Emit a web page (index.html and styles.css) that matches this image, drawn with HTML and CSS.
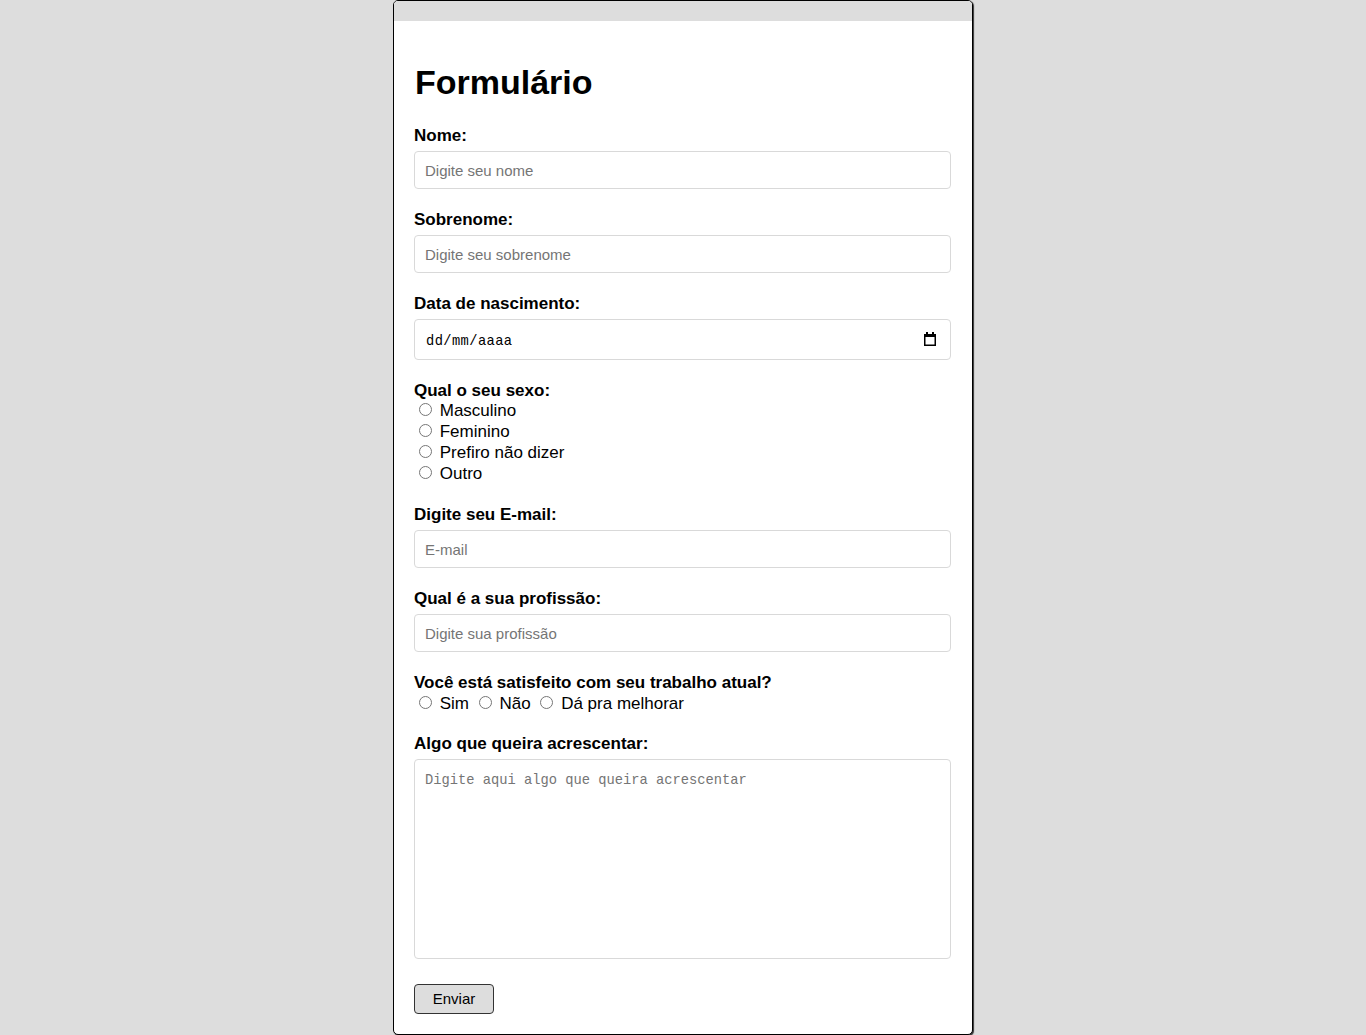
FILE: index.html
```html
<!DOCTYPE html>
<html lang="pt-BR">
<head>
<meta charset="utf-8">
<title>Formulário</title>
<link rel="stylesheet" href="styles.css">
</head>
<body>
<div class="card">
  <div class="card-band"></div>
  <div class="card-body">
    <h1 class="title">Formulário</h1>
    <form class="form">
      <div class="field">
        <label class="field-label" for="nome">Nome:</label>
        <input class="text-input" id="nome" type="text" placeholder="Digite seu nome">
      </div>
      <div class="field">
        <label class="field-label" for="sobrenome">Sobrenome:</label>
        <input class="text-input" id="sobrenome" type="text" placeholder="Digite seu sobrenome">
      </div>
      <div class="field">
        <label class="field-label" for="nasc">Data de nascimento:</label>
        <div class="date-field">
          <input class="text-input date-input" id="nasc" type="text" placeholder="dd/mm/aaaa">
          <svg class="date-icon" width="12" height="14" viewBox="0 0 12 14" aria-hidden="true"><path fill="#000" fill-rule="evenodd" d="M2 0h2v2h4V0h2v2h2v12H0V2h2zM1.5 5v7.5h9V5z"/></svg>
        </div>
      </div>
      <div class="field">
        <div class="field-label radio-title">Qual o seu sexo:</div>
        <div class="option"><input type="radio" name="sexo" id="s1"> <label for="s1">Masculino</label></div>
        <div class="option"><input type="radio" name="sexo" id="s2"> <label for="s2">Feminino</label></div>
        <div class="option"><input type="radio" name="sexo" id="s3"> <label for="s3">Prefiro não dizer</label></div>
        <div class="option"><input type="radio" name="sexo" id="s4"> <label for="s4">Outro</label></div>
      </div>
      <div class="field">
        <label class="field-label" for="email">Digite seu E-mail:</label>
        <input class="text-input" id="email" type="email" placeholder="E-mail">
      </div>
      <div class="field">
        <label class="field-label" for="prof">Qual é a sua profissão:</label>
        <input class="text-input" id="prof" type="text" placeholder="Digite sua profissão">
      </div>
      <div class="field">
        <div class="field-label radio-title">Você está satisfeito com seu trabalho atual?</div>
        <div class="option option-inline"><input type="radio" name="sat" id="t1"> <label for="t1">Sim</label> <input type="radio" name="sat" id="t2"> <label for="t2">Não</label> <input type="radio" name="sat" id="t3"> <label for="t3">Dá pra melhorar</label></div>
      </div>
      <div class="field field-last">
        <label class="field-label" for="extra">Algo que queira acrescentar:</label>
        <textarea class="text-area" id="extra" placeholder="Digite aqui algo que queira acrescentar"></textarea>
      </div>
      <button class="submit" type="button">Enviar</button>
    </form>
  </div>
</div>
</body>
</html>
```
FILE: styles.css
```css
html, body {
  margin: 0;
  padding: 0;
}
body {
  background: #dddddd;
  font-family: "Liberation Sans", Arial, sans-serif;
  color: #000;
}
.card {
  width: 578px;
  margin: 0 auto;
  background: #fff;
  border: 1px solid #000;
  border-radius: 5px;
  box-shadow: 1px 1px 1px #333;
  overflow: hidden;
}
.card-band {
  height: 20px;
  background: #dddddd;
}
.card-body {
  padding: 0 21px 20px 20px;
}
.title {
  margin: 41px 0 23px 1px;
  font-size: 34px;
  line-height: 41px;
  font-weight: bold;
}
.form {
  margin: 0;
}
.field {
  margin-bottom: 21px;
}
.field-last {
  margin-bottom: 25px;
}
.field-label {
  display: block;
  font-size: 17px;
  line-height: 19px;
  font-weight: bold;
  margin-bottom: 6px;
}
.radio-title {
  margin-bottom: 0;
}
.text-input {
  display: block;
  box-sizing: border-box;
  width: 100%;
  height: 38px;
  margin: 0;
  padding: 0 10px;
  border: 1px solid #d9d9d9;
  border-radius: 4px;
  font-family: "Liberation Sans", Arial, sans-serif;
  font-size: 15px;
  color: #000;
  background: #fff;
  outline: none;
}
.text-input::placeholder {
  color: #757575;
}
.date-field {
  position: relative;
}
.date-input {
  height: 41px;
  padding: 3px 10px 0 11px;
  font-family: "Liberation Mono", "DejaVu Sans Mono", monospace;
  font-size: 13.75px;
  letter-spacing: 0.4px;
}
.date-input::placeholder {
  color: #000;
}
.date-icon {
  position: absolute;
  right: 15px;
  top: 13px;
}
.option {
  font-size: 17px;
  line-height: 21px;
  height: 21px;
}
.option-inline {
  box-sizing: border-box;
  padding-top: 1px;
}
.option input[type="radio"] {
  margin: 3px 3px 0 5px;
}
.text-area {
  display: block;
  box-sizing: border-box;
  width: 100%;
  height: 200px;
  margin: 0;
  padding: 11px 10px 10px;
  border: 1px solid #d9d9d9;
  border-radius: 4px;
  font-family: "Liberation Mono", "DejaVu Sans Mono", monospace;
  font-size: 13.75px;
  line-height: 20px;
  resize: none;
  outline: none;
}
.text-area::placeholder {
  color: #757575;
}
.submit {
  display: block;
  box-sizing: border-box;
  width: 80px;
  height: 30px;
  margin: 0;
  padding: 0 0 2px;
  background: #dddddd;
  border: 1px solid #333;
  border-radius: 4px;
  font-family: "Liberation Sans", Arial, sans-serif;
  font-size: 15px;
  color: #000;
}
```
